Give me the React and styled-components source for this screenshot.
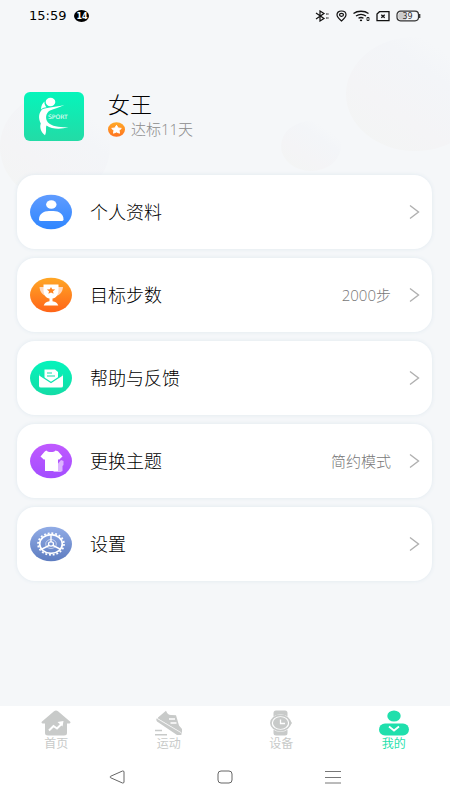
import React from "react";
import styled, { createGlobalStyle } from "styled-components";

const GlobalStyle = createGlobalStyle`
  * {
    box-sizing: border-box;
  }
  body {
    margin: 0;
    background: #f5f7f9;
    font-family: "Open Sans", "Noto Sans CJK SC", sans-serif;
    font-weight: 300;
    color: #000;
  }
  button {
    font: inherit;
    color: inherit;
    border: none;
    background: none;
    padding: 0;
    cursor: pointer;
  }
  svg {
    display: block;
    flex-shrink: 0;
  }
`;

const Page = styled.div`
  position: relative;
  display: flex;
  flex-direction: column;
  min-height: 100vh;
  overflow: hidden;
`;

// Pale bubbles behind the header
const Bubble = styled.div`
  position: absolute;
  z-index: -1;
  top: ${(props) => props.$top}px;
  left: ${(props) => props.$left};
  width: ${(props) => props.$width}px;
  height: ${(props) => props.$height}px;
  border-radius: 50%;
  background: linear-gradient(35deg, #f3f5f4 5%, #f4f4f6 35%, #f3f5f8 65%, #f5f7f9 80%);
`;

const StatusBar = styled.div`
  display: flex;
  align-items: center;
  justify-content: space-between;
  height: 32px;
  padding: 0 29px;
`;

const StatusGroup = styled.div`
  display: flex;
  align-items: center;
  gap: ${(props) => props.$gap}px;
`;

const Clock = styled.time`
  font-family: "DejaVu Sans", sans-serif;
  font-size: 13px;
  font-weight: 400;
  line-height: 16px;
  color: #000;
`;

const Count = styled.span`
  display: flex;
  align-items: center;
  justify-content: center;
  width: 15px;
  height: 12px;
  border-radius: 50%;
  background: #000;
  color: #fff;
  font-family: "DejaVu Sans", sans-serif;
  font-size: 8px;
  font-weight: 700;
`;

const Profile = styled.header`
  display: flex;
  align-items: center;
  gap: 24px;
  padding: 60px 24px 34px;
`;

const ProfileInfo = styled.div`
  display: flex;
  flex-direction: column;
  gap: 3px;
  height: 49px;
`;

const Name = styled.h1`
  margin: 0;
  font-size: 22px;
  font-weight: 300;
  line-height: 24px;
  color: #000;
`;

const Streak = styled.p`
  display: flex;
  align-items: center;
  gap: 6px;
  margin: 0;
  font-size: 15px;
  line-height: 20px;
  color: #8b8b8b;
`;

const Menu = styled.main`
  display: flex;
  flex: 1;
  flex-direction: column;
  gap: 9px;
  padding: 0 18px 24px 17px;
`;

const MenuItem = styled.button`
  display: flex;
  align-items: center;
  height: 74px;
  padding: 0 12px 0 13px;
  border-radius: 18px;
  background: #fff;
  box-shadow: 0 0 4px #dfe8ef;
  text-align: left;
`;

const MenuLabel = styled.span`
  flex: 1;
  padding-left: 18px;
  font-size: 18px;
  line-height: 24px;
`;

const MenuValue = styled.span`
  padding-right: 18px;
  font-size: 15px;
  line-height: 24px;
  color: #777;
`;

const TabBar = styled.nav`
  display: grid;
  grid-template-columns: repeat(4, 1fr);
  height: 48px;
  background: #fff;
`;

const Tab = styled.button`
  display: flex;
  flex-direction: column;
  align-items: center;
  padding-top: 4px;
  font-size: 12px;
  line-height: 16px;
  color: ${(props) => (props.$active ? "#1fdfac" : "#c8cac9")};
  font-weight: 400;
`;

const SystemBar = styled.div`
  display: flex;
  justify-content: center;
  gap: 92px;
  height: 46px;
  background: #fff;
`;

const SystemButton = styled.button`
  display: flex;
  align-items: center;
`;

const Bluetooth = () => (
  <svg width="15" height="12" viewBox="0 0 15 12" fill="none" stroke="#111" strokeWidth="1.2">
    <path d="M1 3l8 5.500-4 2.500V1l4 2.500L1 9" />
    <path d="M11 4h3M11 8h3" strokeDasharray="1.800 .6" />
  </svg>
);

const Pin = () => (
  <svg width="11" height="12" viewBox="0 0 11 12" fill="none" stroke="#111" strokeWidth="1.2">
    <path d="M5.500 11C3 9 1 7 1 4.800 1 2.500 3 1 5.500 1S10 2.500 10 4.800C10 7 8 9 5.500 11z" />
    <ellipse cx="5.500" cy="4.800" rx="2" ry="1.500" />
  </svg>
);

const Wifi = () => (
  <svg width="17" height="12" viewBox="0 0 17 12" fill="none" stroke="#111" strokeWidth="1.300">
    <path d="M.5 3.500c4-3 11-3 15 0M3 6c3-2 7-2 10 0M5.500 8.300c1.500-1 3.500-1 5 0" />
    <ellipse cx="8" cy="10.300" rx="1.200" ry=".9" fill="#111" stroke="none" />
    <path d="M14 7.500h2v3h-2z" strokeWidth=".9" />
  </svg>
);

const NoSim = () => (
  <svg width="14" height="12" viewBox="0 0 14 12" fill="none" stroke="#111" strokeWidth="1.300">
    <path d="M3.500 1.700H13v9H1V4z" />
    <path d="M5.300 4.700l3.400 3M8.700 4.700l-3.400 3" />
  </svg>
);

const Battery = () => (
  <svg width="25" height="12" viewBox="0 0 25 12">
    <rect x="1" y="1.200" width="21.500" height="9.600" rx="3.500" fill="#f5f7f9" stroke="#333" strokeWidth="1.200" />
    <path d="M4 2.200h6v7.600H4C1.500 9 1.500 3 4 2.200z" fill="#ccc" />
    <path d="M23.700 4v4" stroke="#333" strokeWidth="1.300" />
    <text x="11.500" y="9" textAnchor="middle" fontSize="8" fontWeight="400" fontFamily="DejaVu Sans" fill="#333">
      39
    </text>
  </svg>
);

const Avatar = () => (
  <svg width="60" height="49" viewBox="0 0 60 49" role="img" aria-label="SPORT">
    <defs>
      <linearGradient id="avatar" x1="0" y1="0" x2="0" y2="1">
        <stop offset="0" stopColor="#05f5bb" />
        <stop offset="1" stopColor="#23dba6" />
      </linearGradient>
    </defs>
    <rect width="60" height="49" rx="6" fill="url(#avatar)" />
    <g fill="#fff">
      <ellipse cx="26.500" cy="10" rx="4.800" ry="4.200" />
      <path d="M40.500 12.800C36 15.500 30 17 26 18.500C21.500 21 21 27 24 30.500C28 34.500 36 35.500 44.500 35.300C37 37.300 28 37.500 22.500 33.500C21.300 36.500 23 39 21 43.300C17 40 15.300 35.500 16.800 31.500C14 26 14.800 21 18 17.500C22 15.300 32 15.500 40.500 12.800Z" />
      <path d="M17 17.500C17 14 18.500 11 20.500 9.500C20 12 21.500 14 22.500 15.300C20.500 15.300 18.500 16 17 17.500Z" />
      <text x="24" y="27" fontSize="6" fontWeight="400" fontFamily="DejaVu Sans">
        SPORT
      </text>
    </g>
  </svg>
);

const StarBadge = () => (
  <svg width="17" height="15" viewBox="0 0 17 15">
    <defs>
      <linearGradient id="badge" x1="0" y1="0" x2="0" y2="1">
        <stop offset="0" stopColor="#ffaa28" />
        <stop offset="1" stopColor="#ff7320" />
      </linearGradient>
    </defs>
    <ellipse cx="8.500" cy="7.500" rx="8.500" ry="7.300" fill="url(#badge)" />
    <path
      d="M8.500 3.300l1.600 2.700 3.200.4-2.300 2 .5 2.800-3-1.300-3 1.300.5-2.800-2.300-2 3.200-.4z"
      fill="#fff"
      stroke="#fff"
      strokeLinejoin="round"
    />
  </svg>
);

const Disc = ({ id, from, to, children }) => (
  <svg width="42" height="36" viewBox="0 0 42 36">
    <defs>
      <linearGradient id={id} x1="0" y1="0" x2="0" y2="1">
        <stop offset="0" stopColor={from} />
        <stop offset="1" stopColor={to} />
      </linearGradient>
    </defs>
    <ellipse cx="21" cy="18" rx="21" ry="17.300" fill={`url(#${id})`} />
    {children}
  </svg>
);

const UserIcon = () => (
  <Disc id="user" from="#609cff" to="#2f86ff">
    <ellipse cx="21.300" cy="10.500" rx="5.200" ry="4.300" fill="#fff" />
    <path d="M9 25.500C9 20 13.500 17 19 17h4.500C29 17 33.500 20 33.500 25.500Q33.500 27 31.500 27H11Q9 27 9 25.500z" fill="#fff" />
  </Disc>
);

const TrophyIcon = () => (
  <Disc id="trophy" from="#ffa726" to="#ff6418">
    <path d="M9.500 10h5l2 9c-4-1-6.500-4-7-9zM33 10h-5l-2 9c4-1 6.500-4 7-9z" fill="#ffd9bd" />
    <path d="M13.500 7.500h15V13c0 5-2.500 8-6 8.500v2.700c3 .3 4.800 1.600 5.800 4.300H13.700c1-2.700 2.800-4 5.800-4.300v-2.700c-3.500-.5-6-3.500-6-8.500z" fill="#fff" />
    <path d="M21 10l1.200 2.300 3 .3-2.200 1.700.6 2.500-2.600-1.200-2.600 1.200.6-2.500-2.200-1.700 3-.3z" fill="#ff8420" />
  </Disc>
);

const MailIcon = () => (
  <Disc id="mail" from="#04f4bc" to="#14dca6">
    <path d="M14.500 9.500h10.500l3 2.500v7l-7 4-6.500-4z" fill="#fff" />
    <path d="M17 13h5M17 16h8" stroke="#10dfaa" strokeWidth="1.200" />
    <path d="M9 14.500l12 8 12-8V26q0 1.500-2 1.500H11Q9 27.500 9 26z" fill="#fff" />
    <path d="M9.500 15l11.500 7.500L32.500 15" fill="none" stroke="#10e4af" strokeWidth="1.300" />
  </Disc>
);

const ShirtIcon = () => (
  <Disc id="shirt" from="#c05aff" to="#a34dff">
    <path d="M31 17l2.500 1v4l-1 1v5l-2 1h-7v-3z" fill="#dcb5ff" />
    <path d="M16.500 7.500c1.500 2 7.500 2 9 0l2.500.8 4.500 5.200-3.500 3.300-1-.5V28H15V16.300l-1 .5-3.500-3.300 4.500-5.200z" fill="#fff" />
  </Disc>
);

const GearIcon = () => (
  <Disc id="gear" from="#91ace6" to="#5d7cc0">
    <g fill="none" stroke="#fff">
      <ellipse cx="21" cy="18" rx="13" ry="10.800" strokeWidth="1.700" strokeDasharray="1.900 1.850" />
      <ellipse cx="21" cy="18" rx="11.300" ry="9.300" strokeWidth="1.700" />
      <ellipse cx="21" cy="18" rx="5.300" ry="4.500" strokeWidth=".8" opacity=".7" />
      <ellipse cx="21" cy="18" rx="2.500" ry="2.100" strokeWidth="1.300" />
      <path d="M21 9v7M19 19.500l-7 3.500M23 19.500l7 3.500" strokeWidth="1.400" />
    </g>
  </Disc>
);

const Chevron = () => (
  <svg width="11" height="16" viewBox="0 0 11 16" fill="none" stroke="#b0b0b0" strokeWidth="1.400">
    <path d="M1 1.500l8.500 6.500L1 14.500" />
  </svg>
);

const HomeIcon = () => (
  <svg width="30" height="26" viewBox="0 0 30 26">
    <path
      d="M13 1.200q2-1.400 4 0L29 11.500q1.200 1.500-.5 2H26V23q0 2.500-3 2.500H7q-3 0-3-2.500v-9.500H1.500q-1.700-.5-.5-2z"
      fill="currentColor"
    />
    <path d="M8 20.500l4.500-4.500 3.500 2.500 5-5" fill="none" stroke="#fff" strokeWidth="2" />
    <path d="M16.500 12l6-1-1 5.500z" fill="#fff" />
  </svg>
);

const ShoeIcon = () => (
  <svg width="30" height="26" viewBox="0 0 30 26" fill="currentColor">
    <path d="M4 7.500L12 .8q1.500 4.200 5 4.200l5 .3 3 10.200 3 3.500v4L4 8.500z" />
    <path d="M2.800 8.300L27 22.500q1.500 1.500 0 2.500h-4L3 11.500q-1.500-2-.2-3.200z" />
    <path d="M15 9h6M16.500 13h6" stroke="#fff" strokeWidth="1.600" />
    <path d="M3.500 8.800L27 22.600" stroke="#fff" strokeWidth=".6" />
    <path d="M1 20.500h7M1 24.700h12" stroke="currentColor" strokeWidth="1.600" />
  </svg>
);

const WatchIcon = () => (
  <svg width="24" height="26" viewBox="0 0 24 26">
    <path d="M7 .5h9q2.500 0 2.500 2.500v20q0 2.500-2.500 2.500H7Q4.500 25.500 4.500 23V3Q4.500.5 7 .5z" fill="currentColor" />
    <ellipse cx="11.500" cy="13" rx="10.800" ry="8.700" fill="#fff" />
    <path d="M20.500 9.500l2.500 3.500-2.500 3.500z" fill="currentColor" />
    <ellipse cx="11.500" cy="13" rx="9.600" ry="7.700" fill="none" stroke="currentColor" strokeWidth="1.700" />
    <ellipse cx="11.500" cy="13" rx="7.500" ry="5.900" fill="currentColor" />
    <path d="M11.500 9.500v4h4.500" fill="none" stroke="#fff" strokeWidth="1.300" />
  </svg>
);

const MeIcon = () => (
  <svg width="30" height="26" viewBox="0 0 30 26">
    <ellipse cx="15" cy="6" rx="6.700" ry="5.600" fill="currentColor" />
    <rect y="13.500" width="30" height="12" rx="6" fill="currentColor" />
    <path d="M10 16.500l5 4 5-4" fill="none" stroke="#fff" strokeWidth="1.800" />
  </svg>
);

const items = [
  { label: "个人资料", icon: <UserIcon /> },
  { label: "目标步数", icon: <TrophyIcon />, value: "2000步" },
  { label: "帮助与反馈", icon: <MailIcon /> },
  { label: "更换主题", icon: <ShirtIcon />, value: "简约模式" },
  { label: "设置", icon: <GearIcon /> },
];

const tabs = [
  { label: "首页", icon: <HomeIcon /> },
  { label: "运动", icon: <ShoeIcon /> },
  { label: "设备", icon: <WatchIcon /> },
  { label: "我的", icon: <MeIcon />, active: true },
];

export default function App() {
  return (
    <>
      <GlobalStyle />
      <Page>
        <Bubble $top={37} $left="calc(100% - 104px)" $width={138} $height={114} />
        <Bubble $top={121} $left="calc(100% - 169px)" $width={60} $height={50} />
        <Bubble $top={94} $left="0" $width={110} $height={106} />
        <StatusBar>
          <StatusGroup $gap={8}>
            <Clock>15:59</Clock>
            <Count>14</Count>
          </StatusGroup>
          <StatusGroup $gap={6}>
            <Bluetooth />
            <Pin />
            <Wifi />
            <NoSim />
            <Battery />
          </StatusGroup>
        </StatusBar>
        <Profile>
          <Avatar />
          <ProfileInfo>
            <Name>女王</Name>
            <Streak>
              <StarBadge />
              达标11天
            </Streak>
          </ProfileInfo>
        </Profile>
        <Menu>
          {items.map((item) => (
            <MenuItem key={item.label} type="button">
              {item.icon}
              <MenuLabel>{item.label}</MenuLabel>
              {item.value && <MenuValue>{item.value}</MenuValue>}
              <Chevron />
            </MenuItem>
          ))}
        </Menu>
        <TabBar>
          {tabs.map((tab) => (
            <Tab key={tab.label} type="button" $active={tab.active}>
              {tab.icon}
              {tab.label}
            </Tab>
          ))}
        </TabBar>
        <SystemBar>
          <SystemButton type="button" aria-label="返回">
            <svg width="16" height="14" viewBox="0 0 16 14" fill="none" stroke="#666">
              <path d="M1.500 6.300L13.500 1q1.500-.3 1.500 1v10q0 1.300-1.500 1L1.500 7.700q-1-.7 0-1.400z" />
            </svg>
          </SystemButton>
          <SystemButton type="button" aria-label="主屏幕">
            <svg width="16" height="14" viewBox="0 0 16 14" fill="none" stroke="#666">
              <rect x="1" y="1" width="14" height="12" rx="3" />
            </svg>
          </SystemButton>
          <SystemButton type="button" aria-label="最近任务">
            <svg width="16" height="14" viewBox="0 0 16 14" stroke="#777">
              <path d="M0 1.500h16M0 7.500h16M0 13h16" />
            </svg>
          </SystemButton>
        </SystemBar>
      </Page>
    </>
  );
}
